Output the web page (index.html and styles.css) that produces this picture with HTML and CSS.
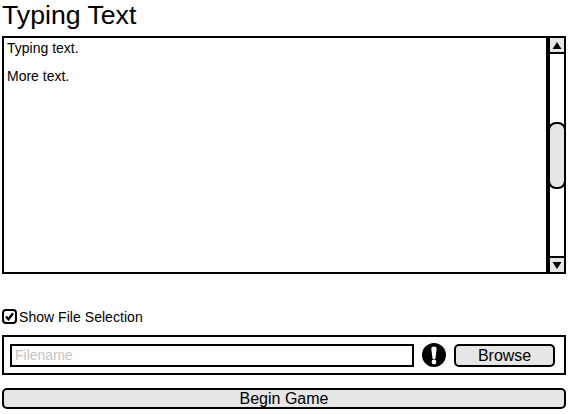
FILE: index.html
```html
<!DOCTYPE html>
<html lang="en">
<head>
<meta charset="utf-8">
<title>Typing Text</title>
<link rel="stylesheet" href="styles.css">
</head>
<body>
<main class="app">
  <h1 class="title">Typing Text</h1>
  <section class="text-box">
    <div class="text-content">
      <p>Typing text.</p>
      <p>More text.</p>
    </div>
    <div class="scrollbar">
      <div class="scroll-btn">
        <svg width="10" height="7" viewBox="0 0 10 7"><path d="M5 0 L9.5 7 H0.5 Z" fill="#000"/></svg>
      </div>
      <div class="scroll-track"><div class="scroll-thumb"></div></div>
      <div class="scroll-btn">
        <svg width="10" height="7" viewBox="0 0 10 7"><path d="M0.5 0 H9.5 L5 7 Z" fill="#000"/></svg>
      </div>
    </div>
  </section>
  <label class="check-row">
    <span class="check">
      <svg width="9" height="9" viewBox="0 0 9 9"><path d="M1 4.5 L3.5 7.2 L8 1.2" fill="none" stroke="#000" stroke-width="2.4"/></svg>
    </span>
    <span class="check-label">Show File Selection</span>
  </label>
  <section class="file-box">
    <div class="file-input">Filename</div>
    <svg class="alert" width="24" height="24" viewBox="0 0 24 24"><circle cx="12" cy="12" r="12" fill="#000"/><path d="M9.3 5.8 C9.3 2.6 14.7 2.6 14.7 5.8 L13.5 15.2 C13.3 16.2 10.7 16.2 10.5 15.2 Z" fill="#fff"/><circle cx="12" cy="19" r="2.4" fill="#fff"/></svg>
    <button class="btn browse" type="button">Browse</button>
  </section>
  <button class="btn begin" type="button">Begin Game</button>
</main>
</body>
</html>
```
FILE: styles.css
```css
* { box-sizing: border-box; }
html, body { margin: 0; padding: 0; background: #fff; }
body { font-family: "Liberation Sans", Arial, sans-serif; color: #000; width: 570px; height: 414px; overflow: hidden; }
.app { display: flex; flex-direction: column; padding: 0 4px 0 2px; }
.title { margin: 0; height: 36px; font-size: 26.67px; font-weight: 400; line-height: 30px; }
.text-box { display: flex; height: 238px; border: 2px solid #000; }
.text-content { flex: 1; padding: 2px 3px; font-size: 14px; line-height: 16px; border-right: 4px solid #000; }
.text-content p { margin: 0 0 12px; }
.scrollbar { width: 14px; display: flex; flex-direction: column; }
.scroll-btn { height: 14px; background: #e6e6e6; display: flex; align-items: center; justify-content: center; }
.scroll-track { flex: 1; display: flex; flex-direction: column; border-top: 2px solid #000; border-bottom: 2px solid #000; padding-top: 68px; }
.scroll-thumb { height: 67px; background: #e6e6e6; border: 2px solid #000; border-radius: 8px; margin: 0 -2px; }
.check-row { display: flex; align-items: flex-start; gap: 2px; margin-top: 35px; height: 16px; font-size: 14px; letter-spacing: 0.04px; }
.check { width: 15px; height: 15px; border: 2px solid #000; border-radius: 4px; display: flex; align-items: center; justify-content: center; }
.check-label { align-self: center; }
.file-box { display: flex; align-items: center; margin-top: 10px; height: 40px; border: 2px solid #000; padding: 0 9px 0 6px; }
.file-input { width: 405px; height: 23px; border: 2px solid #000; padding: 0 3px; font-size: 14px; line-height: 19px; color: #c4c4c4; }
.alert { margin-left: 8px; }
.btn { font-family: inherit; color: #000; background: #e6e6e6; border: 2px solid #000; border-radius: 5px; padding: 0; font-size: 16px; line-height: 18px; }
.browse { width: 101px; height: 23px; margin-left: 8px; padding-top: 1px; }
.begin { margin-top: 13px; height: 21px; }
```
